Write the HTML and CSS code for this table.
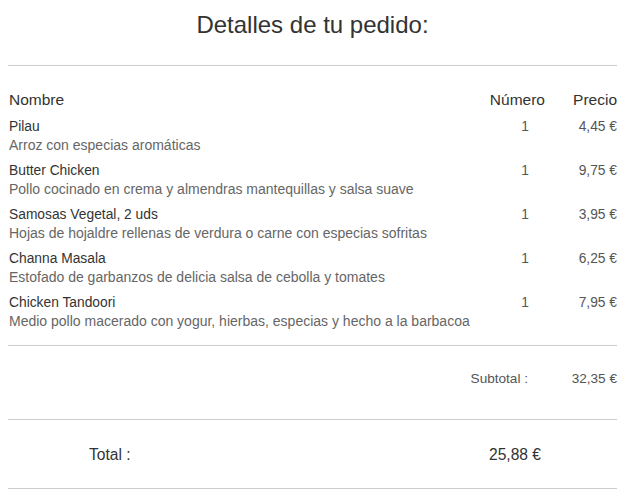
FILE: index.html
```html
<!DOCTYPE html>
<html lang="es">
<head>
<meta charset="utf-8">
<title>Detalles de tu pedido</title>
<link rel="stylesheet" href="styles.css">
</head>
<body>
<main class="order">
  <h1 class="order-title">Detalles de tu pedido:</h1>
  <hr class="rule rule-top">
  <div class="items">
    <div class="item-head">
      <span class="col-name">Nombre</span>
      <span class="col-qty">Número</span>
      <span class="col-price">Precio</span>
    </div>
    <div class="item">
      <div class="item-name">Pilau</div>
      <span class="item-qty">1</span>
      <span class="item-price">4,45 €</span>
      <div class="item-desc">Arroz con especias aromáticas</div>
    </div>
    <div class="item">
      <div class="item-name">Butter Chicken</div>
      <span class="item-qty">1</span>
      <span class="item-price">9,75 €</span>
      <div class="item-desc">Pollo cocinado en crema y almendras mantequillas y salsa suave</div>
    </div>
    <div class="item">
      <div class="item-name">Samosas Vegetal, 2 uds</div>
      <span class="item-qty">1</span>
      <span class="item-price">3,95 €</span>
      <div class="item-desc">Hojas de hojaldre rellenas de verdura o carne con especias sofritas</div>
    </div>
    <div class="item">
      <div class="item-name">Channa Masala</div>
      <span class="item-qty">1</span>
      <span class="item-price">6,25 €</span>
      <div class="item-desc">Estofado de garbanzos de delicia salsa de cebolla y tomates</div>
    </div>
    <div class="item">
      <div class="item-name">Chicken Tandoori</div>
      <span class="item-qty">1</span>
      <span class="item-price">7,95 €</span>
      <div class="item-desc">Medio pollo macerado con yogur, hierbas, especias y hecho a la barbacoa</div>
    </div>
  </div>
  <hr class="rule">
  <div class="subtotal">
    <span class="subtotal-label">Subtotal :</span>
    <span class="subtotal-value">32,35 €</span>
  </div>
  <hr class="rule">
  <div class="total">
    <span class="total-label">Total :</span>
    <span class="total-value">25,88 €</span>
  </div>
  <hr class="rule">
</main>
</body>
</html>
```

FILE: styles.css
```css
html, body {
  margin: 0;
  padding: 0;
  background: #ffffff;
}

body {
  font-family: "Liberation Sans", Arial, sans-serif;
  color: #333333;
}

.order {
  width: 609px;
  margin-left: 8px;
  padding-top: 11px;
}

.order-title {
  margin: 0;
  font-size: 24px;
  font-weight: normal;
  line-height: 28px;
  text-align: center;
  color: #333333;
}

.rule {
  margin: 0;
  border: 0;
  height: 1px;
  background: #cccccc;
}

.rule-top {
  margin-top: 26px;
}

.items {
  padding: 24px 0 15px 1px;
  display: flex;
  flex-direction: column;
  gap: 8px;
}

.item-head {
  display: grid;
  grid-template-columns: 1fr 90px 72px;
  font-size: 15.5px;
  line-height: 20px;
  color: #333333;
}

.col-qty,
.col-price {
  text-align: right;
}

.item {
  display: grid;
  grid-template-columns: 1fr 90px 72px;
  grid-template-areas:
    "name qty price"
    "desc desc desc";
  font-size: 13.8px;
  line-height: 18px;
}

.item-name {
  grid-area: name;
  color: #333333;
}

.item-desc {
  grid-area: desc;
  font-size: 14px;
  color: #666666;
}

.item-qty {
  grid-area: qty;
  text-align: right;
  padding-right: 16px;
  color: #555555;
}

.item-price {
  grid-area: price;
  text-align: right;
  color: #555555;
}

.subtotal {
  display: flex;
  justify-content: flex-end;
  font-size: 13.6px;
  line-height: 18px;
  color: #555555;
  padding-top: 24px;
  padding-bottom: 31px;
}

.subtotal-label {
  width: 90px;
  text-align: right;
}

.subtotal-value {
  width: 89px;
  text-align: right;
}

.total {
  display: flex;
  font-size: 15.6px;
  line-height: 20px;
  color: #333333;
  padding-top: 25px;
  padding-bottom: 23px;
}

.total-label {
  padding-left: 81px;
  width: 400px;
}
```
